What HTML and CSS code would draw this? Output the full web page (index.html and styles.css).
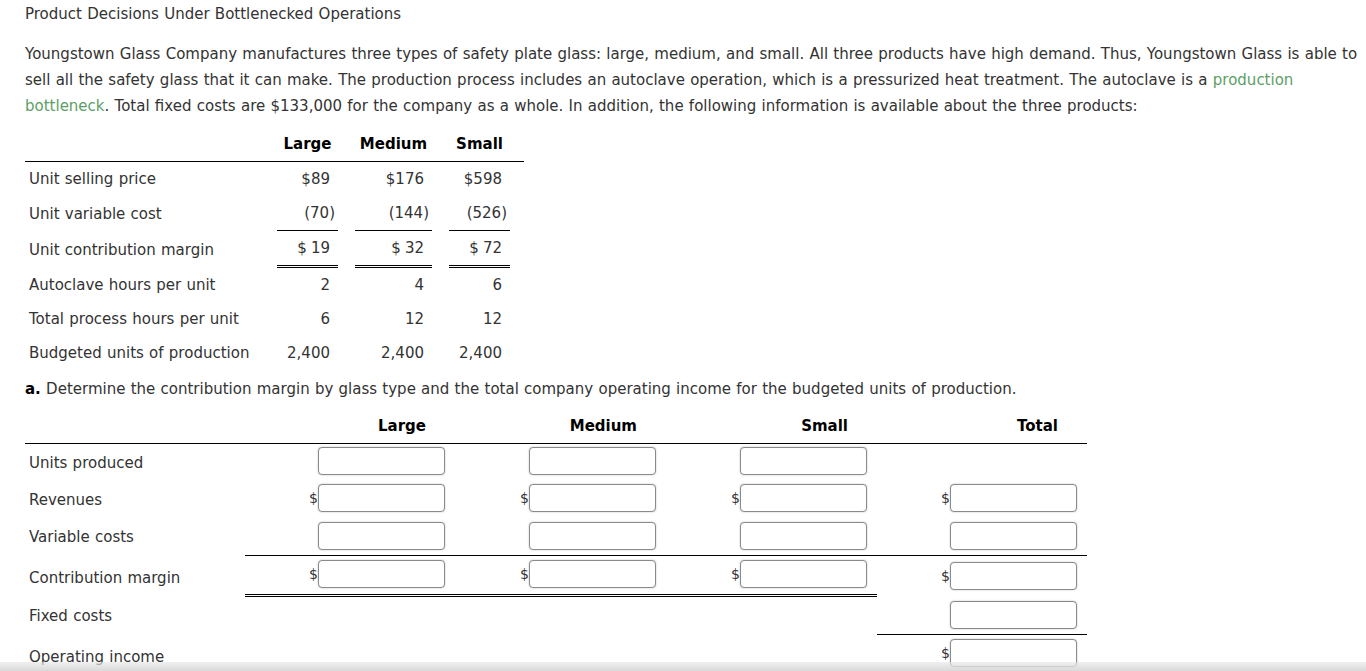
FILE: index.html
```html
<!DOCTYPE html>
<html>
<head>
<meta charset="utf-8">
<link rel="stylesheet" href="styles.css">
</head>
<body>
<div class="page">
  <div class="title">Product Decisions Under Bottlenecked Operations</div>
  <p class="intro">Youngstown Glass Company manufactures three types of safety plate glass: large, medium, and small. All three products have high demand. Thus, Youngstown Glass is able to sell all the safety glass that it can make. The production process includes an autoclave operation, which is a pressurized heat treatment. The autoclave is a <span class="term">production</span> <span class="term">bottleneck</span>. Total fixed costs are $133,000 for the company as a whole. In addition, the following information is available about the three products:</p>

  <div class="data">
    <div class="hd lab"></div>
    <div class="hd">Large</div>
    <div class="hd">Medium</div>
    <div class="hd last">Small</div>

    <div class="lab">Unit selling price</div>
    <div class="v">$89</div>
    <div class="v">$176</div>
    <div class="v">$598</div>

    <div class="lab">Unit variable cost</div>
    <div class="v u">(70<span class="p">)</span></div>
    <div class="v u">(144<span class="p">)</span></div>
    <div class="v u">(526<span class="p">)</span></div>

    <div class="lab">Unit contribution margin</div>
    <div class="v dd"><span class="cur">$</span>19</div>
    <div class="v dd"><span class="cur">$</span>32</div>
    <div class="v dd"><span class="cur">$</span>72</div>

    <div class="lab">Autoclave hours per unit</div>
    <div class="v">2</div>
    <div class="v">4</div>
    <div class="v">6</div>

    <div class="lab">Total process hours per unit</div>
    <div class="v">6</div>
    <div class="v">12</div>
    <div class="v">12</div>

    <div class="lab">Budgeted units of production</div>
    <div class="v">2,400</div>
    <div class="v">2,400</div>
    <div class="v">2,400</div>
  </div>

  <p class="part"><b>a.</b> Determine the contribution margin by glass type and the total company operating income for the budgeted units of production.</p>

  <div class="calc">
    <div class="ch lab"></div>
    <div class="ch">Large</div>
    <div class="ch">Medium</div>
    <div class="ch">Small</div>
    <div class="ch">Total</div>

    <div class="lab">Units produced</div>
    <div class="c"><span class="d"></span><input type="text"></div>
    <div class="c"><span class="d"></span><input type="text"></div>
    <div class="c"><span class="d"></span><input type="text"></div>
    <div class="c"></div>

    <div class="lab">Revenues</div>
    <div class="c"><span class="d">$</span><input type="text"></div>
    <div class="c"><span class="d">$</span><input type="text"></div>
    <div class="c"><span class="d">$</span><input type="text"></div>
    <div class="c"><span class="d">$</span><input type="text"></div>

    <div class="lab">Variable costs</div>
    <div class="c t4 b1"><span class="d"></span><input type="text"></div>
    <div class="c t4 b1"><span class="d"></span><input type="text"></div>
    <div class="c t4 b1"><span class="d"></span><input type="text"></div>
    <div class="c t4 b1"><span class="d"></span><input type="text"></div>

    <div class="lab lower">Contribution margin</div>
    <div class="c t4 b2"><span class="d">$</span><input type="text"></div>
    <div class="c t4 b2"><span class="d">$</span><input type="text"></div>
    <div class="c t4 b2"><span class="d">$</span><input type="text"></div>
    <div class="c t6"><span class="d">$</span><input type="text"></div>

    <div class="lab">Fixed costs</div>
    <div class="c"></div>
    <div class="c"></div>
    <div class="c"></div>
    <div class="c t4 b1"><span class="d"></span><input type="text"></div>

    <div class="lab bottom">Operating income</div>
    <div class="c"></div>
    <div class="c"></div>
    <div class="c"></div>
    <div class="c t4"><span class="d">$</span><input type="text"></div>
  </div>
</div>
<div class="fade"></div>
</body>
</html>
```

FILE: styles.css
```css
html, body {
  margin: 0;
  padding: 0;
  background: #fff;
}
body {
  font-family: "DejaVu Sans", Verdana, sans-serif;
  font-size: 15px;
  word-spacing: 0.5px;
  color: #333;
  overflow: hidden;
}
.page {
  padding: 4px 3px 0 25px;
}
.title {
  line-height: 20px;
}
.intro {
  margin: 17px 0 0 0;
  line-height: 26px;
}
.term {
  color: #5d9e66;
}

/* first table */
.data {
  display: grid;
  grid-template-columns: 235px 61px 77px 61px;
  grid-template-rows: 35px 34px 35px 37px 34px 34px 34px;
  column-gap: 17px;
  width: 485px;
  padding-right: 14px;
  margin-top: 8px;
}
.data > div {
  box-sizing: border-box;
  display: flex;
  align-items: center;
}
.data .hd {
  font-weight: bold;
  color: #000;
  justify-content: center;
  border-bottom: 1px solid #000;
  margin-right: -17px;
  padding-right: 17px;
}
.data .hd.last {
  margin-right: -14px;
  padding-right: 14px;
}
.data .lab {
  padding-left: 4px;
}
.data .v {
  justify-content: flex-end;
  padding-right: 8px;
}
.data .v .p {
  margin-right: -5px;
}
.data .v .cur {
  margin-right: 4px;
}
.data .u {
  border-bottom: 1px solid #000;
}
.data .dd {
  border-bottom: 3px double #000;
}

.part {
  margin: 6px 0 0 0;
  line-height: 26px;
}
.part b {
  color: #000;
}

/* second table */
.calc {
  display: grid;
  grid-template-columns: 220px 210px 211px 211px 210px;
  grid-template-rows: 36px 37px 37px 38px 41px 38px 37px;
  width: 1062px;
  margin-top: 6px;
}
.calc > div {
  box-sizing: border-box;
  display: flex;
  align-items: center;
}
.calc .ch {
  font-weight: bold;
  color: #000;
  justify-content: flex-end;
  padding-right: 29px;
  border-bottom: 1px solid #000;
}
.calc .lab {
  padding-left: 4px;
}
.calc .lab.lower {
  padding-top: 2px;
}
.calc .lab.bottom {
  align-items: flex-start;
  padding-top: 13px;
}
.calc .c {
  justify-content: flex-end;
  align-items: flex-start;
  padding-top: 3px;
  padding-right: 10px;
}
.calc .c.t4 {
  padding-top: 4px;
}
.calc .c.t6 {
  padding-top: 6px;
}
.calc .d {
  width: 9px;
  height: 28px;
  line-height: 28px;
  text-align: right;
  font-size: 14px;
  color: #333;
}
.calc input {
  box-sizing: border-box;
  width: 127px;
  height: 28px;
  margin: 0;
  border: 1px solid #8a8a8a;
  border-radius: 4px;
  box-shadow: 0 0 2px rgba(0,0,0,0.25);
  background: #fff;
  font: inherit;
}
.calc .b1 {
  border-bottom: 1px solid #000;
}
.calc .b2 {
  border-bottom: 3px double #000;
}

.fade {
  position: fixed;
  left: 0;
  right: 0;
  bottom: 0;
  height: 9px;
  background: linear-gradient(to bottom, rgba(230,230,230,0.6), #d9d9d9);
}
```
